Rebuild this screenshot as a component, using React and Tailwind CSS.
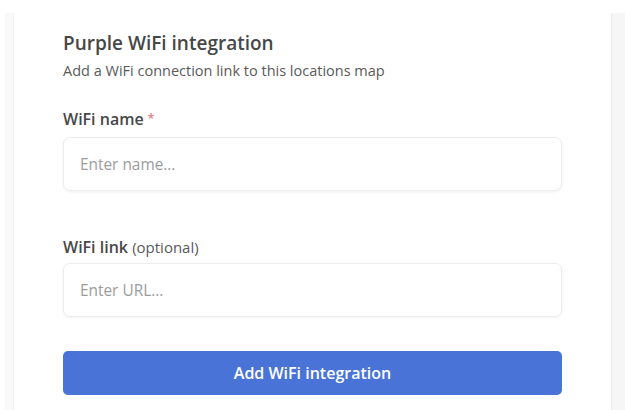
export default function App() {
  return (
    <div className="w-[625px] h-[410px] bg-white flex overflow-hidden" style={{ fontFamily: '"Open Sans", "Noto Sans", sans-serif' }}>
      <div className="w-[8px] ml-[5px] mt-[13px] bg-[#f9f9f9]" />
      <div className="w-[598px] mt-[13px] bg-white border-l border-[#f1f1f1] pl-[49px] pr-[49px] pt-[17px]">
        <h2 className="text-[19px] font-semibold text-[#474747] leading-[26px]">Purple WiFi integration</h2>
        <p className="text-[14.5px] text-[#5a5a5a] leading-[20px] mt-[5px]">Add a WiFi connection link to this locations map</p>

        <label className="block mt-[27px] text-[16px] font-semibold text-[#474747] leading-[22px]">
          WiFi name <span className="text-[#e27d7d] text-[12px] align-top">*</span>
        </label>
        <input
          type="text"
          placeholder="Enter name..."
          className="mt-[7px] w-full h-[54px] rounded-[7px] border border-[#ececec] shadow-[0_1px_3px_rgba(0,0,0,0.06)] px-[16px] text-[15.4px] text-[#444] placeholder:text-[#9c9c9c] outline-none"
        />

        <label className="block mt-[45px] text-[16px] font-semibold text-[#474747] leading-[22px]">
          WiFi link <span className="font-normal text-[15px] text-[#5a5a5a]">(optional)</span>
        </label>
        <input
          type="text"
          placeholder="Enter URL..."
          className="mt-[5px] w-full h-[54px] rounded-[7px] border border-[#ececec] shadow-[0_1px_3px_rgba(0,0,0,0.06)] px-[16px] text-[15.4px] text-[#444] placeholder:text-[#9c9c9c] outline-none"
        />

        <button className="mt-[34px] w-full h-[44px] rounded-[5px] bg-[#4a73d7] text-white text-[16px] font-semibold">
          Add WiFi integration
        </button>
      </div>
      <div className="flex-1 mt-[13px] bg-[#f6f6f6] border-l border-[#ebebeb]" />
    </div>
  );
}
